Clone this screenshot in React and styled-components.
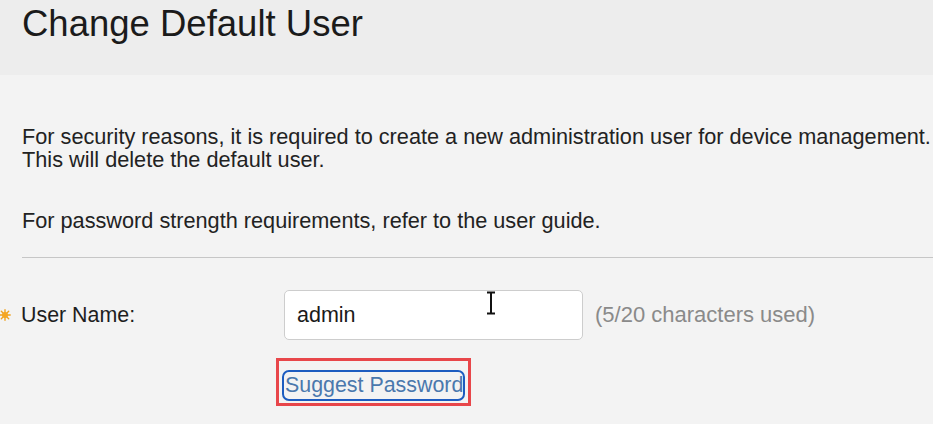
import React from 'react';
import styled, {createGlobalStyle} from 'styled-components';

const GlobalStyle = createGlobalStyle`
  html, body {
    margin: 0;
    padding: 0;
    background: #f3f3f3;
    font-family: "Liberation Sans", Arial, sans-serif;
    color: #1e1e1e;
    overflow: hidden;
  }
`;

const Page = styled.div`
  width: 933px;
  height: 424px;
  background: #f3f3f3;
  overflow: hidden;
`;

const Header = styled.header`
  height: 75px;
  box-sizing: border-box;
  padding: 3px 0 0 22px;
  background: #ededed;
`;

const Title = styled.h1`
  margin: 0;
  font-size: 36.5px;
  line-height: 41px;
  font-weight: 400;
  color: #1b1b1b;
`;

const Content = styled.div`
  padding: 50px 0 0 22px;
`;

const Paragraph = styled.p`
  margin: 0 0 ${props => props.gap || 0}px;
  font-size: 21.7px;
  line-height: 23px;
  color: #222;
  white-space: nowrap;
`;

const Divider = styled.hr`
  margin: 0;
  border: 0;
  border-top: 1px solid #c6c6c6;
  height: 0;
`;

const FieldRow = styled.div`
  display: flex;
  align-items: center;
  margin: 32px 0 0 -22px;
`;

const Label = styled.label`
  display: flex;
  align-items: center;
  width: 284px;
  font-size: 21.4px;
  color: #1e1e1e;
`;

const Required = styled.svg`
  width: 12px;
  height: 12px;
  margin: 0 10px 0 -1px;
  flex: none;
`;

const InputWrap = styled.div`
  position: relative;
`;

const TextInput = styled.input`
  box-sizing: border-box;
  width: 299px;
  height: 50px;
  padding: 0 12px;
  border: 1px solid #cdcdcd;
  border-radius: 5px;
  background: #fff;
  font-family: "Liberation Sans", Arial, sans-serif;
  font-size: 21.5px;
  color: #1a1a1a;
  outline: none;
`;

const Cursor = styled.svg`
  position: absolute;
  left: 200px;
  top: 1px;
  width: 14px;
  height: 24px;
  pointer-events: none;
`;

const Counter = styled.span`
  margin-left: 12px;
  font-size: 22px;
  color: #8a8a8a;
`;

const ActionRow = styled.div`
  margin: 18px 0 0 254px;
`;

const Highlight = styled.div`
  display: inline-block;
  border: 3px solid #e8464a;
  padding: 9px 3px 2px 3px;
`;

const LinkButton = styled.button`
  display: block;
  margin: 0;
  padding: 2px 0 3px 1px;
  border: 2px solid #1d5cc0;
  border-radius: 7px;
  background: transparent;
  font-family: "Liberation Sans", Arial, sans-serif;
  font-size: 21.4px;
  line-height: 22px;
  color: #4a78ad;
  cursor: pointer;
`;

const App = () => {
  return (
    <Page>
      <GlobalStyle />
      <Header>
        <Title>Change Default User</Title>
      </Header>
      <Content>
        <Paragraph gap={38}>
          For security reasons, it is required to create a new administration user for device management.
          <br />
          This will delete the default user.
        </Paragraph>
        <Paragraph gap={25}>For password strength requirements, refer to the user guide.</Paragraph>
        <Divider />
        <FieldRow>
          <Label>
            <Required viewBox="0 0 12 12">
              <g stroke="#f0a21e" strokeWidth="1.4" strokeLinecap="round">
                <line x1="6" y1="0.8" x2="6" y2="11.2" />
                <line x1="0.8" y1="6" x2="11.2" y2="6" />
                <line x1="2.3" y1="2.3" x2="9.7" y2="9.7" />
                <line x1="9.7" y1="2.3" x2="2.3" y2="9.7" />
              </g>
              <circle cx="6" cy="6" r="3" fill="#f5a623" />
            </Required>
            User Name:
          </Label>
          <InputWrap>
            <TextInput defaultValue="admin" />
            <Cursor viewBox="0 0 14 24">
              <path d="M3 1.5h8M7 1.5v21M3 22.5h8" stroke="#111" strokeWidth="2" fill="none" />
            </Cursor>
          </InputWrap>
          <Counter>(5/20 characters used)</Counter>
        </FieldRow>
        <ActionRow>
          <Highlight>
            <LinkButton type="button">Suggest Password</LinkButton>
          </Highlight>
        </ActionRow>
      </Content>
    </Page>
  );
};

export default App;
